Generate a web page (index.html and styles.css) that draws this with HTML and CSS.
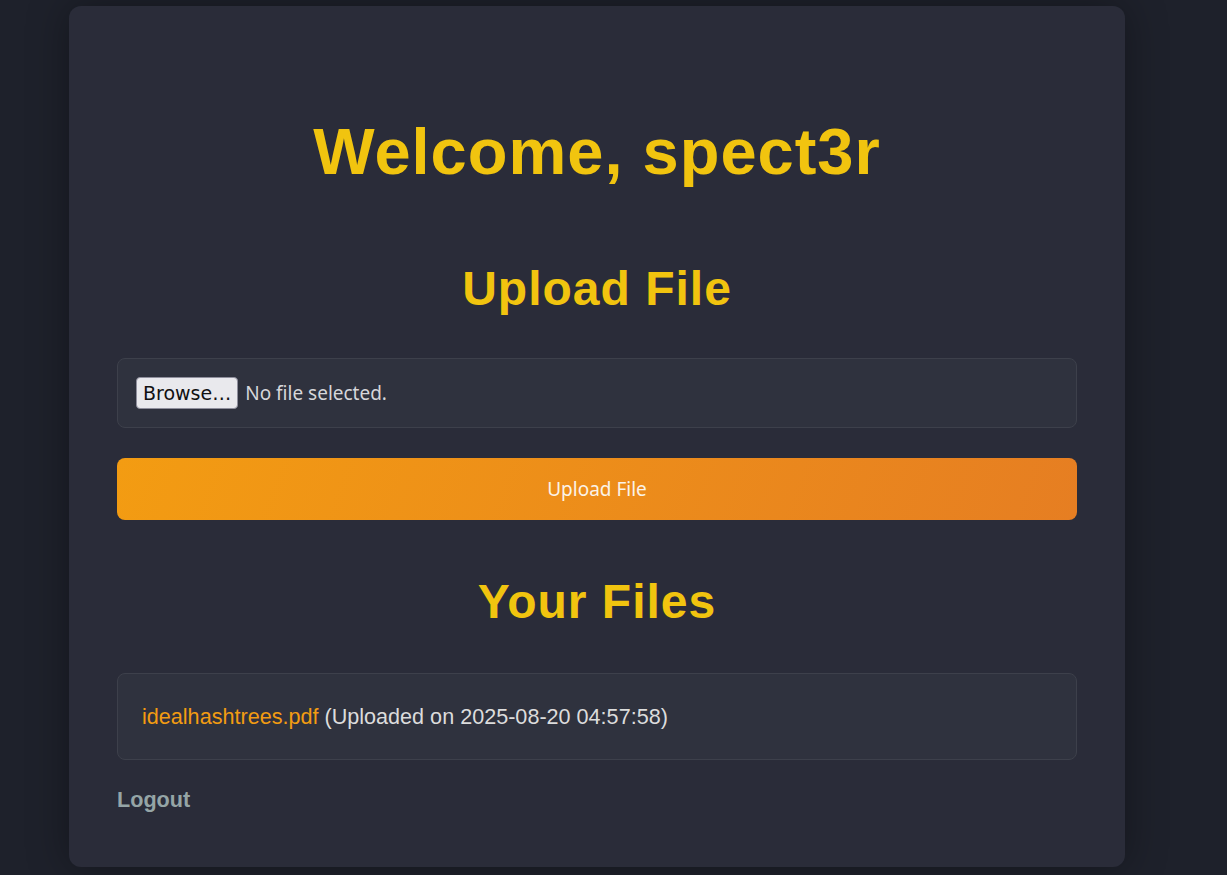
FILE: index.html
```html
<!DOCTYPE html>
<html lang="en">
<head>
<meta charset="utf-8">
<title>Dashboard</title>
<link rel="stylesheet" href="styles.css">
</head>
<body>
<main class="card">
  <h1 class="title">Welcome, spect3r</h1>
  <h2 class="section-title">Upload File</h2>
  <form class="upload-form">
    <div class="file-box">
      <span class="browse-btn">Browse…</span>
      <span class="file-status">No file selected.</span>
    </div>
    <button type="button" class="upload-btn">Upload File</button>
  </form>
  <h2 class="section-title files-title">Your Files</h2>
  <div class="files-box">
    <a class="file-link" href="#">idealhashtrees.pdf</a> <span class="file-meta">(Uploaded on 2025-08-20 04:57:58)</span>
  </div>
  <a class="logout" href="#">Logout</a>
</main>
</body>
</html>
```
FILE: styles.css
```css
html, body {
  margin: 0;
  padding: 0;
}
body {
  background: #1e212b;
  font-family: "Liberation Sans", Arial, sans-serif;
  min-height: 875px;
  display: flex;
  align-items: flex-start;
}
.card {
  box-sizing: border-box;
  width: 1056px;
  margin: 6px 0 0 69px;
  padding: 0 48px 54px;
  background: #2a2c39;
  border-radius: 12px;
  box-shadow: 0 0 40px rgba(0, 0, 0, 0.35);
  display: flex;
  flex-direction: column;
}
.title {
  margin: 108px 0 0;
  text-align: center;
  color: #f1c40f;
  font-size: 65px;
  line-height: 76px;
  letter-spacing: 1px;
  font-weight: 700;
}
.section-title {
  margin: 71px 0 0;
  text-align: center;
  color: #f1c40f;
  font-size: 48px;
  line-height: 56px;
  letter-spacing: 1px;
  font-weight: 700;
}
.upload-form {
  margin-top: 41px;
  display: flex;
  flex-direction: column;
  gap: 30px;
}
.file-box {
  box-sizing: border-box;
  height: 70px;
  padding: 0 18px;
  background: #2f323e;
  border: 1px solid #3d404b;
  border-radius: 8px;
  display: flex;
  align-items: center;
  gap: 7px;
  font-family: "Noto Sans", "Open Sans", sans-serif;
  font-size: 19px;
}
.browse-btn {
  box-sizing: border-box;
  height: 32px;
  padding: 0 6px;
  display: flex;
  align-items: center;
  background: #e9e9ed;
  color: #111;
  border: 1px solid #8f8f9d;
  border-radius: 4px;
  font-family: "DejaVu Sans", sans-serif;
  font-size: 19px;
}
.file-status {
  color: #d6d6da;
}
.upload-btn {
  height: 62px;
  border: none;
  border-radius: 8px;
  background: linear-gradient(110deg, #f39c12 0%, #e67e22 100%);
  color: #fbf3e8;
  font-family: "Noto Sans", "Open Sans", sans-serif;
  font-size: 19px;
  cursor: pointer;
}
.files-title {
  margin-top: 54px;
}
.files-box {
  box-sizing: border-box;
  margin-top: 43px;
  height: 87px;
  padding: 0 24px;
  background: #2f323e;
  border: 1px solid #3d404b;
  border-radius: 8px;
  display: flex;
  align-items: center;
  gap: 6px;
  font-size: 21.6px;
}
.file-link {
  color: #f39c12;
  text-decoration: none;
}
.file-meta {
  color: #dcdcdc;
}
.logout {
  margin-top: 27px;
  align-self: flex-start;
  color: #95a5a6;
  font-weight: 700;
  font-size: 21.6px;
  text-decoration: none;
}
```
